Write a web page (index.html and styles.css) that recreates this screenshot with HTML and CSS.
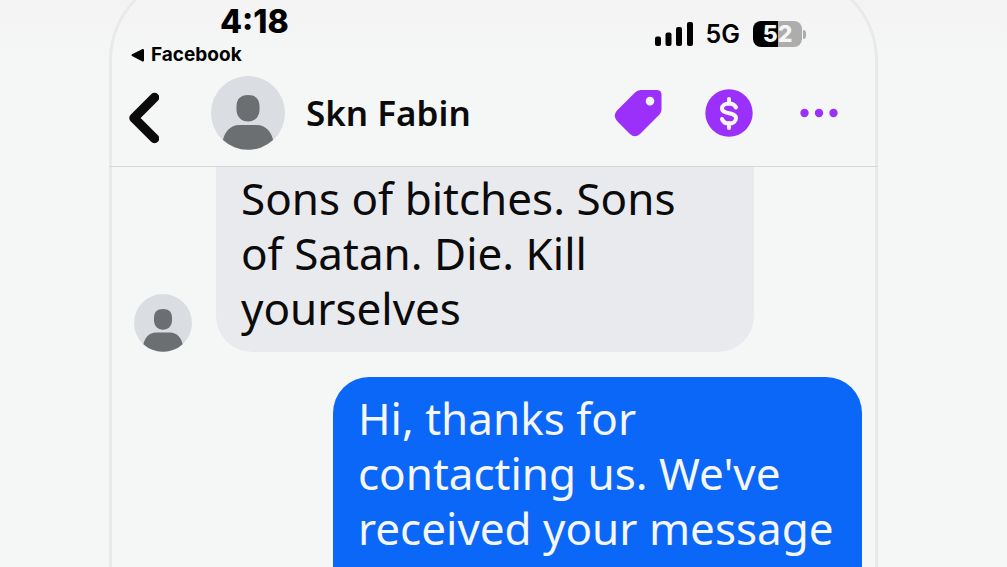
FILE: index.html
```html
<!DOCTYPE html>
<html lang="en">
<head>
<meta charset="utf-8">
<meta name="viewport" content="width=device-width, initial-scale=1">
<title>Skn Fabin</title>
<link rel="stylesheet" href="styles.css">
</head>
<body>
<svg class="symbols" aria-hidden="true">
  <symbol id="person" viewBox="0 0 74 74">
    <circle cx="37" cy="37" r="37" fill="#dadde2"/>
    <path d="M37 19c7.500 0 11.500 4 11.500 11.500v3C48.500 41 43.500 45.500 37 45.500S25.500 41 25.500 33.500v-3C25.500 23 29.500 19 37 19z" fill="#6b6f72"/>
    <path d="M12 64c1.500-8 7.500-15 16-15h18c8.500 0 14.500 7 16 15A37 37 0 0 1 12 64z" fill="#6b6f72"/>
  </symbol>
</svg>
<main class="phone">
  <header class="top">
    <div class="status">
      <div class="status-left">
        <time class="time">4:18</time>
        <a class="return" href="#">
          <svg width="14" height="14" viewBox="0 0 14 14" aria-hidden="true"><path d="M12 2v10.500L1.500 7.200z" stroke="#000" stroke-width="2" stroke-linejoin="round"/></svg>
          Facebook
        </a>
      </div>
      <div class="status-right">
        <svg width="38" height="24" viewBox="0 0 38 24" aria-label="Signal">
          <rect x="0" y="14.500" width="6" height="9.500" rx="2"/><rect x="10.500" y="10.500" width="6" height="13.500" rx="2"/><rect x="21" y="5" width="6" height="19" rx="2"/><rect x="32" y="0" width="6" height="24" rx="2"/>
        </svg>
        <span class="network">5G</span>
        <span class="battery-wrap"><span class="battery">52</span><span class="battery-tip"></span></span>
      </div>
    </div>
    <nav class="bar">
      <button class="icon" aria-label="Back">
        <svg width="30" height="62" viewBox="0 -10 30 62"><path d="M25.500 5.500L5 26l20.500 20.500" fill="none" stroke="#0b0b0b" stroke-width="9.500" stroke-linecap="round" stroke-linejoin="round"/></svg>
      </button>
      <svg class="avatar" role="img" aria-label="Profile picture"><use href="#person"/></svg>
      <h1 class="name">Skn Fabin</h1>
      <div class="actions">
        <button class="icon" aria-label="Label">
          <svg width="48" height="48" viewBox="0 0 48 48"><path fill="#9b30fa" fill-rule="evenodd" d="M26.500 1H42.500Q47.500 1 47.500 6V20.500Q47.500 23.500 45.500 25.500L26 45Q21 49.500 16 45L3 32Q-1.500 26.500 3 21.500L21 3.500Q23.500 1 26.500 1zM36 7.800a4.300 4.300 0 1 0 0 8.600 4.300 4.300 0 0 0 0-8.600z"/></svg>
        </button>
        <button class="icon" aria-label="Payment">
          <svg width="48" height="48" viewBox="0 0 48 48"><circle cx="24" cy="24" r="23.700" fill="#9b30fa"/><path d="M24 10v5M24 34v5M31 18.500C29.500 15.500 27 14.500 24 14.500c-4 0-7 2-7 5 0 6.500 14 3 14 9.500 0 3.500-3 5.500-7 5.500-3.500 0-6-1.500-7-4.500" fill="none" stroke="#f5f6f8" stroke-width="4" stroke-linecap="round"/></svg>
        </button>
        <button class="icon" aria-label="More">
          <svg width="38" height="10" viewBox="0 0 38 10" fill="#9b30fa"><circle cx="4.500" cy="5" r="4.200"/><circle cx="19" cy="5" r="4.200"/><circle cx="33.500" cy="5" r="4.200"/></svg>
        </button>
      </div>
    </nav>
  </header>
  <section class="thread" aria-label="Conversation">
    <div class="row">
      <svg class="avatar avatar-small" role="img" aria-label="Skn Fabin"><use href="#person"/></svg>
      <p class="bubble incoming">Sons of bitches. Sons<br>of Satan. Die. Kill<br>yourselves</p>
    </div>
    <div class="row row-sent">
      <p class="bubble outgoing">Hi, thanks for<br>contacting us. We've<br>received your message</p>
    </div>
  </section>
</main>
</body>
</html>
```
FILE: styles.css
```css
* {
  box-sizing: border-box;
}

body {
  margin: 0;
  min-height: 100vh;
  overflow: hidden;
  background: linear-gradient(#f3f3f3, #f5f7f6 70px);
  color: #0b0b0b;
  font-family: "Noto Sans", sans-serif;
}

.symbols {
  display: none;
}

.phone {
  margin: -27px 129px 0 109px;
  min-height: calc(100vh + 27px);
  border: 3px solid #e8eae9;
  border-bottom: 0;
  border-radius: 87px 87px 0 0;
}

.top {
  margin: 0 -3px;
  padding: 24px 3px 0;
  border-bottom: 1px solid #d5d8d8;
}

.status {
  display: flex;
  justify-content: space-between;
  height: 70px;
  padding: 4px 69px 0 19px;
  color: #000;
  font-family: Inter, sans-serif;
}

.time {
  display: block;
  padding-left: 89px;
  font-size: 32px;
  font-weight: 800;
  line-height: 36px;
}

.return {
  display: flex;
  align-items: center;
  gap: 6px;
  color: inherit;
  font-size: 19px;
  font-weight: 700;
  line-height: 30px;
  text-decoration: none;
}

.status-right {
  display: flex;
  align-items: center;
  height: 60px;
  gap: 13px;
}

.network {
  font-size: 25px;
  font-weight: 600;
}

.battery-wrap {
  display: flex;
  align-items: center;
  gap: 1px;
}

.battery {
  width: 49px;
  border-radius: 8px;
  background: linear-gradient(90deg, #000 51%, #adadad 51%);
  color: #f5f7f6;
  font-size: 23px;
  font-weight: 800;
  line-height: 26px;
  text-align: center;
}

.battery-tip {
  width: 3px;
  height: 9px;
  border-radius: 0 4px 4px 0;
  background: #adadad;
}

.bar {
  display: flex;
  align-items: center;
  height: 96px;
  padding: 0 37px 10px 17px;
}

.icon {
  display: flex;
  padding: 0;
  border: 0;
  background: none;
}

.avatar {
  flex: none;
  width: 74px;
  height: 74px;
  margin: 0 21px 0 52px;
}

.name {
  margin: 0;
  font-size: 35px;
  font-weight: 600;
  line-height: 40px;
}

.actions {
  display: flex;
  align-items: center;
  gap: 43px;
  margin-left: auto;
}

.actions .icon:last-child {
  margin-left: 4px;
}

.thread {
  display: flex;
  flex-direction: column;
  gap: 25px;
  padding: 0 13px 0 22px;
}

.row {
  display: flex;
  align-items: flex-end;
}

.row-sent {
  justify-content: flex-end;
}

.avatar-small {
  width: 58px;
  height: 58px;
  margin: 0 24px 0 0;
}

.bubble {
  margin: 0;
  font-size: 44px;
  line-height: 55px;
  white-space: nowrap;
}

.incoming {
  flex: 0 1 538px;
  padding: 4px 25px 16px;
  border-radius: 0 0 36px 36px;
  background: #e9eaee;
}

.outgoing {
  flex: 0 1 529px;
  padding: 14px 25px 20px;
  border-radius: 36px 36px 0 0;
  background: #0b67f8;
  color: #f5f6f8;
}
```
